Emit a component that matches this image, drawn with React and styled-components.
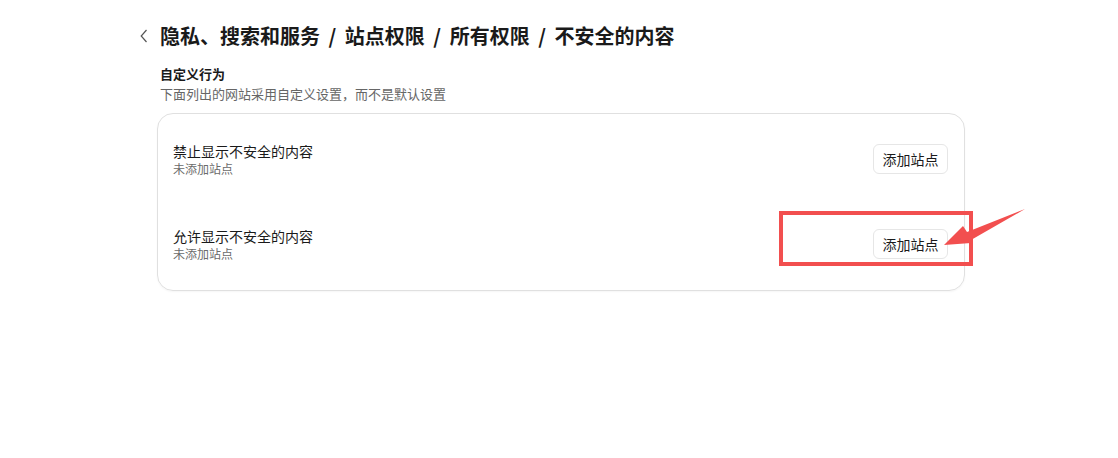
import React from 'react';
import styled, { createGlobalStyle } from 'styled-components';

const GlobalStyle = createGlobalStyle`
  html, body {
    margin: 0;
    padding: 0;
    background: #ffffff;
  }
  body {
    font-family: "Noto Sans CJK SC", "Noto Sans", sans-serif;
    color: #1a1a1a;
  }
`;

const rules = [
  { id: 'block', title: '禁止显示不安全的内容', status: '未添加站点' },
  { id: 'allow', title: '允许显示不安全的内容', status: '未添加站点' },
];

const App = () => {
  return (
    <>
      <GlobalStyle />
      <Page>
        <Header>
          <BackButton aria-label="返回">
            <svg width="8" height="14" viewBox="0 0 8 14">
              <path d="M6.5 1 L1.2 7 L6.5 13" fill="none" stroke="#555" strokeWidth="1.2" />
            </svg>
          </BackButton>
          <Title>隐私、搜索和服务 / 站点权限 / 所有权限 / 不安全的内容</Title>
        </Header>
        <Section>
          <SectionTitle>自定义行为</SectionTitle>
          <SectionDesc>下面列出的网站采用自定义设置，而不是默认设置</SectionDesc>
          <Card>
            {rules.map((rule) => (
              <Row key={rule.id}>
                <RowText>
                  <RowTitle>{rule.title}</RowTitle>
                  <RowStatus>{rule.status}</RowStatus>
                </RowText>
                <AddButton>添加站点</AddButton>
              </Row>
            ))}
          </Card>
        </Section>
        <Highlight />
        <Arrow width="90" height="45" viewBox="0 0 90 45">
          <polygon
            points="0,37 19,18 23,24 81,1 27,32 27,35"
            fill="#f24f4f"
          />
        </Arrow>
      </Page>
    </>
  );
};

export default App;

const Page = styled.div`
  position: relative;
  width: 1118px;
  height: 458px;
  padding: 22px 0 0 138px;
  box-sizing: border-box;
`;

const Header = styled.div`
  display: flex;
  align-items: center;
  gap: 10px;
`;

const BackButton = styled.button`
  display: flex;
  align-items: center;
  justify-content: center;
  width: 12px;
  height: 28px;
  padding: 0;
  border: none;
  background: none;
`;

const Title = styled.h1`
  margin: 0;
  font-size: 20px;
  line-height: 28px;
  font-weight: 700;
  color: #1a1a1a;
  white-space: nowrap;
  word-spacing: 4px;
`;

const Section = styled.div`
  display: flex;
  flex-direction: column;
  margin-left: 22px;
  margin-top: 15px;
`;

const SectionTitle = styled.div`
  font-size: 13px;
  line-height: 18px;
  font-weight: 700;
  color: #1a1a1a;
`;

const SectionDesc = styled.div`
  margin-top: 2px;
  font-size: 13px;
  line-height: 18px;
  color: #666666;
`;

const Card = styled.div`
  margin-top: 10px;
  margin-left: -3px;
  width: 808px;
  box-sizing: border-box;
  padding: 2px 0 4px;
  border: 1px solid #e0e0e0;
  border-radius: 16px;
  box-shadow: 0 1px 2px rgba(0, 0, 0, 0.04);
  display: flex;
  flex-direction: column;
`;

const Row = styled.div`
  display: flex;
  align-items: center;
  justify-content: space-between;
  min-height: 85px;
  padding: 0 16px 0 15px;
`;

const RowText = styled.div`
  display: flex;
  flex-direction: column;
  padding-top: 1px;
`;

const RowTitle = styled.div`
  font-size: 14px;
  line-height: 19px;
  color: #1a1a1a;
`;

const RowStatus = styled.div`
  font-size: 12px;
  line-height: 16px;
  color: #6b6b6b;
`;

const AddButton = styled.button`
  width: 75px;
  height: 30px;
  padding: 0;
  border: 1px solid #e6e6e6;
  border-radius: 6px;
  background: #ffffff;
  font-family: inherit;
  font-size: 14px;
  color: #1a1a1a;
`;

const Highlight = styled.div`
  position: absolute;
  left: 779px;
  top: 211px;
  width: 194px;
  height: 55px;
  box-sizing: border-box;
  border: 4px solid #f24f4f;
`;

const Arrow = styled.svg`
  position: absolute;
  left: 944px;
  top: 208px;
`;
